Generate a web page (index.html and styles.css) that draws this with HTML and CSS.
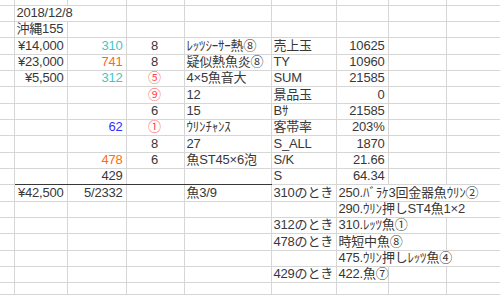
FILE: index.html
```html
<!DOCTYPE html>
<html lang="ja">
<head>
<meta charset="utf-8">
<title>沖縄155</title>
<link rel="stylesheet" href="styles.css">
</head>
<body>
<table class="sheet">
<colgroup>
<col class="c-a"><col class="c-b"><col class="c-c"><col class="c-d"><col class="c-e"><col class="c-f"><col class="c-g"><col class="c-h"><col class="c-i">
</colgroup>
<tr class="top"><td></td><td></td><td></td><td></td><td></td><td></td><td></td><td></td><td></td></tr>
<tr><td></td><td colspan="2" class="l">2018/12/8</td><td></td><td></td><td></td><td></td><td></td><td></td></tr>
<tr><td></td><td class="l">沖縄155</td><td></td><td></td><td></td><td></td><td></td><td></td><td></td></tr>
<tr><td></td><td class="r">¥14,000</td><td class="r cyan">310</td><td class="c">8</td><td class="l">ﾚｯﾂｼｰｻｰ熱⑧</td><td class="l">売上玉</td><td class="r">10625</td><td></td><td></td></tr>
<tr><td></td><td class="r">¥23,000</td><td class="r orange">741</td><td class="c">8</td><td class="l">疑似熱魚炎⑧</td><td class="l">TY</td><td class="r">10960</td><td></td><td></td></tr>
<tr><td></td><td class="r">¥5,500</td><td class="r cyan">312</td><td class="c red">⑤</td><td class="l">4×5魚音大</td><td class="l">SUM</td><td class="r">21585</td><td></td><td></td></tr>
<tr><td></td><td></td><td></td><td class="c red">⑨</td><td class="l">12</td><td class="l">景品玉</td><td class="r">0</td><td></td><td></td></tr>
<tr><td></td><td></td><td></td><td class="c">6</td><td class="l">15</td><td class="l">Bｻ</td><td class="r">21585</td><td></td><td></td></tr>
<tr><td></td><td></td><td class="r blue">62</td><td class="c red">①</td><td class="l">ｳﾘﾝﾁｬﾝｽ</td><td class="l">客帯率</td><td class="r">203%</td><td></td><td></td></tr>
<tr><td></td><td></td><td></td><td class="c">8</td><td class="l">27</td><td class="l">S_ALL</td><td class="r">1870</td><td></td><td></td></tr>
<tr><td></td><td></td><td class="r orange">478</td><td class="c">6</td><td class="l">魚ST45×6泡</td><td class="l">S/K</td><td class="r">21.66</td><td></td><td></td></tr>
<tr class="total-above"><td></td><td class="rule"></td><td class="r rule">429</td><td class="rule"></td><td class="rule"></td><td class="l">S</td><td class="r">64.34</td><td></td><td></td></tr>
<tr><td></td><td class="r">¥42,500</td><td class="r">5/2332</td><td></td><td class="l">魚3/9</td><td class="l">310のとき</td><td colspan="3" class="l">250.ﾊﾞﾗｹ3回金器魚ｳﾘﾝ②</td></tr>
<tr><td></td><td></td><td></td><td></td><td></td><td></td><td colspan="3" class="l">290.ｳﾘﾝ押しST4魚1×2</td></tr>
<tr><td></td><td></td><td></td><td></td><td></td><td class="l">312のとき</td><td colspan="2" class="l">310.ﾚｯﾂ魚①</td><td></td></tr>
<tr><td></td><td></td><td></td><td></td><td></td><td class="l">478のとき</td><td colspan="2" class="l">時短中魚⑧</td><td></td></tr>
<tr><td></td><td></td><td></td><td></td><td></td><td></td><td colspan="3" class="l">475.ｳﾘﾝ押しﾚｯﾂ魚④</td></tr>
<tr><td></td><td></td><td></td><td></td><td></td><td class="l">429のとき</td><td class="l">422.魚⑦</td><td></td><td></td></tr>
<tr class="bottom"><td></td><td></td><td></td><td></td><td></td><td></td><td></td><td></td><td></td></tr>
</table>
</body>
</html>
```
FILE: styles.css
```css
html, body {
  margin: 0;
  padding: 0;
  background: #ffffff;
}
body {
  width: 500px;
  height: 296px;
  overflow: hidden;
  font-family: "Liberation Sans", "Noto Sans CJK JP", sans-serif;
  font-size: 13px;
  letter-spacing: -0.2px;
  color: #383838;
}
.sheet {
  border-collapse: collapse;
  table-layout: fixed;
  width: 500px;
}
.c-a { width: 14px; }
.c-b { width: 53px; }
.c-c { width: 59px; }
.c-d { width: 58px; }
.c-e { width: 87px; }
.c-f { width: 65px; }
.c-g { width: 52px; }
.c-h { width: 58px; }
.c-i { width: 54px; }
.sheet td {
  border: 0;
  border-right: 1px solid #d6d6d6;
  border-bottom: 1px solid #d6d6d6;
  height: 16.35px;
  padding: 0 3px 1px 2px;
  line-height: 14px;
  vertical-align: bottom;
  white-space: nowrap;
  overflow: visible;
  box-sizing: border-box;
}
.sheet tr.top td {
  height: 5px;
}
.sheet tr.bottom td {
  height: 12px;
}
.sheet td.rule {
  border-bottom: 1px solid #383838;
}
.l { text-align: left; }
.r { text-align: right; }
.c { text-align: center; }
.cyan { color: #3cc8c8; }
.orange { color: #ff6a14; }
.blue { color: #2f2fff; }
.red { color: #ff4a4a; }
```
